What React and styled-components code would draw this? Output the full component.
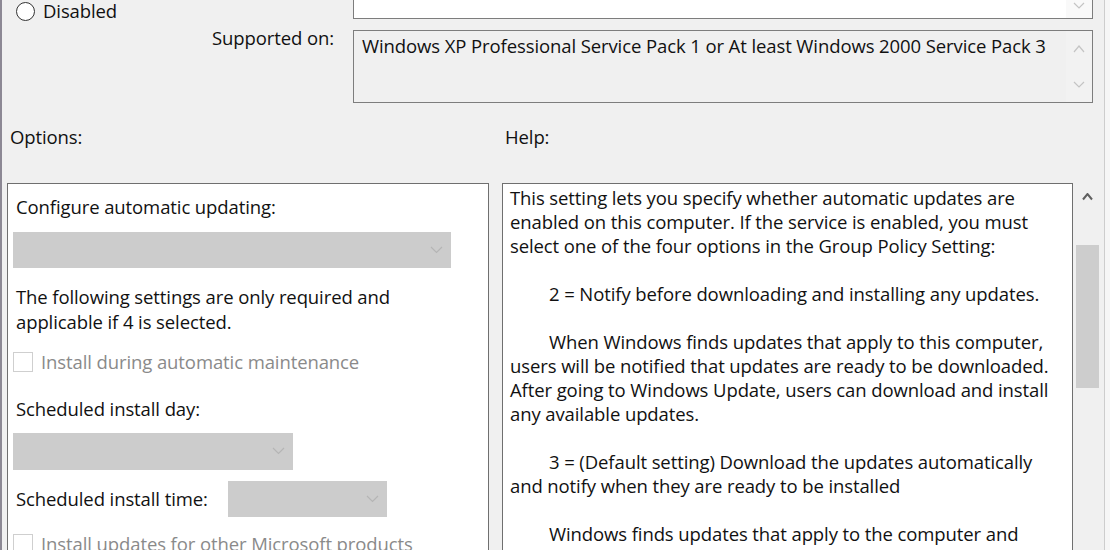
import styled, { createGlobalStyle } from "styled-components";

const GlobalStyle = createGlobalStyle`
  body {
    margin: 0;
    background: #f6f6f6;
    font-family: "Open Sans", "Noto Sans", sans-serif;
    color: #111;
  }
`;

const Dialog = styled.div`
  width: 1105px;
  height: 550px;
  box-sizing: border-box;
  overflow: hidden;
  background: #f0f0f0;
  border-left: 2px solid #8c8894;
  border-right: 1px solid #cdcdcd;
  font-size: 18.5px;
  letter-spacing: -0.1px;
`;

const TopRow = styled.div`
  display: flex;
  align-items: flex-start;
  height: 22px;
`;

const LeftCell = styled.div`
  width: 351px;
  padding-left: 14px;
  box-sizing: border-box;
`;

const RadioRow = styled.label`
  display: flex;
  align-items: center;
  gap: 8px;
  line-height: 22px;
`;

const Radio = styled.span`
  width: 19px;
  height: 19px;
  box-sizing: border-box;
  border: 1px solid #333;
  border-radius: 50%;
  background: #fff;
  margin-top: 1px;
`;

const Box = styled.div`
  width: 740px;
  height: ${(p) => p.$h}px;
  box-sizing: border-box;
  border: 1px solid #7d7d7d;
  border-top: ${(p) => (p.$cut ? "none" : "1px solid #7d7d7d")};
  background: ${(p) => p.$bg};
  display: flex;
`;

const BoxText = styled.div`
  flex: 1;
  padding: 4px 8px;
  line-height: 22px;
`;

const ScrollCol = styled.div`
  width: 26px;
  display: flex;
  flex-direction: column;
  align-items: center;
  justify-content: ${(p) => p.$justify || "space-between"};
  padding: ${(p) => p.$pad || "0"};
  background: ${(p) => p.$bg};
`;

const SupportedRow = styled.div`
  display: flex;
  margin-top: 8px;
`;

const FieldLabel = styled.div`
  width: 351px;
  padding-right: 19px;
  box-sizing: border-box;
  text-align: right;
  line-height: 16px;
`;

const Main = styled.div`
  display: grid;
  grid-template-columns: 482px 599px;
  column-gap: 13px;
  padding-left: 5px;
  margin-top: 23px;
`;

const SectionLabel = styled.div`
  padding-left: 3px;
  line-height: 22px;
  height: 57px;
`;

const Panel = styled.div`
  background: #fff;
  border: 1px solid #6f6f6f;
  border-bottom: none;
  height: 400px;
  box-sizing: border-box;
  padding: ${(p) => p.$pad};
`;

const HelpWrap = styled.div`
  display: flex;
`;

const Label = styled.div`
  padding-left: 3px;
  line-height: ${(p) => p.$lh || 24}px;
  margin-top: ${(p) => p.$mt || 0}px;
  color: ${(p) => (p.$disabled ? "#8a8a8a" : "inherit")};
  white-space: nowrap;
`;

const Select = styled.div`
  width: ${(p) => p.$w}px;
  height: ${(p) => p.$h || 36}px;
  margin-top: ${(p) => p.$mt || 0}px;
  background: #cccccc;
  display: flex;
  align-items: center;
  justify-content: flex-end;
  padding-right: 8px;
  box-sizing: border-box;
  flex-shrink: 0;
`;

const Row = styled.div`
  display: flex;
  align-items: center;
  gap: ${(p) => p.$gap || 0}px;
  margin-top: ${(p) => p.$mt || 0}px;
`;

const Check = styled.span`
  width: 20px;
  height: 20px;
  box-sizing: border-box;
  border: 1px solid #cfcfcf;
  background: #fff;
  flex-shrink: 0;
`;

const HelpText = styled.div`
  width: 571px;
  background: #fff;
  border: 1px solid #6f6f6f;
  border-bottom: none;
  height: 400px;
  box-sizing: border-box;
  padding: 2px 0 0 7px;
  line-height: 24px;
  white-space: nowrap;
`;

const Line = styled.div`
  padding-left: ${(p) => (p.$indent ? 39 : 0)}px;
  height: 24px;
`;

const Scrollbar = styled.div`
  width: 28px;
  background: #f0f0f0;
  display: flex;
  flex-direction: column;
  align-items: center;
  padding-top: 10px;
`;

const Thumb = styled.div`
  width: 23px;
  height: 143px;
  background: #cdcdcd;
  margin-top: 44px;
`;

const Chevron = ({ up, color = "#b5b5b5", w = 12, sw = 1.2 }) => (
  <svg width={w} height={w / 2 + 2} viewBox={`0 0 ${w} ${w / 2 + 2}`}>
    <polyline
      points={up ? `1,${w / 2 + 1} ${w / 2},1 ${w - 1},${w / 2 + 1}` : `1,1 ${w / 2},${w / 2} ${w - 1},1`}
      fill="none"
      stroke={color}
      strokeWidth={sw}
    />
  </svg>
);

const helpLines = [
  ["This setting lets you specify whether automatic updates are"],
  ["enabled on this computer. If the service is enabled, you must"],
  ["select one of the four options in the Group Policy Setting:"],
  [""],
  ["2 = Notify before downloading and installing any updates.", true],
  [""],
  ["When Windows finds updates that apply to this computer,", true],
  ["users will be notified that updates are ready to be downloaded."],
  ["After going to Windows Update, users can download and install"],
  ["any available updates."],
  [""],
  ["3 = (Default setting) Download the updates automatically", true],
  ["and notify when they are ready to be installed"],
  [""],
  ["Windows finds updates that apply to the computer and", true],
];

const App = () => {
  return (
    <>
      <GlobalStyle />
      <Dialog>
        <TopRow>
          <LeftCell>
            <RadioRow>
              <Radio />
              Disabled
            </RadioRow>
          </LeftCell>
          <Box $h={19} $cut $bg="#fff">
            <BoxText />
            <ScrollCol $bg="#f9f9f9" $justify="flex-start" $pad="2px 0 0">
              <Chevron w={12} color="#c4c4c4" />
            </ScrollCol>
          </Box>
        </TopRow>

        <SupportedRow>
          <FieldLabel>Supported on:</FieldLabel>
          <Box $h={73} $bg="#f0f0f0">
            <BoxText>
              Windows XP Professional Service Pack 1 or At least Windows 2000
              Service Pack 3
            </BoxText>
            <ScrollCol $bg="#f2f2f2" $pad="14px 0 13px">
              <Chevron up w={12} color="#c4c4c4" />
              <Chevron w={12} color="#c4c4c4" />
            </ScrollCol>
          </Box>
        </SupportedRow>

        <Main>
          <SectionLabel>Options:</SectionLabel>
          <SectionLabel>Help:</SectionLabel>

          <Panel $pad="11px 0 0 5px">
            <Label>Configure automatic updating:</Label>
            <Select $w={438} $mt={13}>
              <Chevron w={13} />
            </Select>
            <Label $lh={25} $mt={16}>
              The following settings are only required and
              <br />
              applicable if 4 is selected.
            </Label>
            <Row $gap={5} $mt={16}>
              <Check />
              <Label $disabled>Install during automatic maintenance</Label>
            </Row>
            <Label $mt={23}>Scheduled install day:</Label>
            <Select $w={280} $h={37} $mt={12}>
              <Chevron w={13} />
            </Select>
            <Row $mt={11}>
              <Label style={{ width: 212 }}>Scheduled install time:</Label>
              <Select $w={159}>
                <Chevron w={13} />
              </Select>
            </Row>
            <Row $gap={5} $mt={15}>
              <Check />
              <Label $disabled>Install updates for other Microsoft products</Label>
            </Row>
          </Panel>

          <HelpWrap>
            <HelpText>
              {helpLines.map(([text, indent], i) => (
                <Line key={i} $indent={indent}>
                  {text}
                </Line>
              ))}
            </HelpText>
            <Scrollbar>
              <Chevron up w={11} color="#606060" sw={2} />
              <Thumb />
            </Scrollbar>
          </HelpWrap>
        </Main>
      </Dialog>
    </>
  );
};

export default App;
